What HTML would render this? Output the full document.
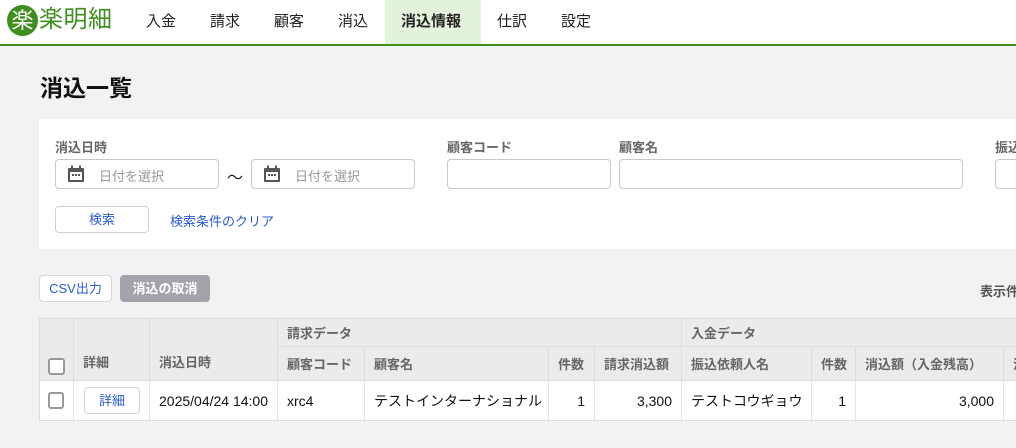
<!DOCTYPE html>
<html><head><meta charset="utf-8"><style>
*{box-sizing:border-box;margin:0;padding:0}
body{width:1016px;height:448px;overflow:hidden;background:#f2f2f2;font-family:"Liberation Sans","Noto Sans CJK JP",sans-serif;position:relative;color:#222}
.a{position:absolute;white-space:nowrap}
.hdr{position:absolute;left:0;top:0;width:1016px;height:46px;background:#fff;border-bottom:2px solid #3f8f1f}
.nav{font-size:15px;top:10px;color:#222}
.lbl{font-size:13px;font-weight:bold;color:#666;top:137px}
.inp{background:#fff;border:1px solid #c8c8c8;border-radius:4px;height:30px;top:159px}
.ph{font-size:13px;color:#999}
.th{position:absolute;background:#ebebeb;border-right:1px solid #ddd;border-bottom:1px solid #ddd;font-size:13px;font-weight:bold;color:#666;padding:0 9px;display:flex;align-items:center;white-space:nowrap}
.td{position:absolute;background:#fff;border-right:1px solid #e4e4e4;border-bottom:1px solid #ddd;font-size:14px;color:#111;padding:0 9px;display:flex;align-items:center;white-space:nowrap;top:381px;height:40px}
.cb{width:17px;height:17px;border:2px solid #999;border-radius:3px;background:#fff}
.r{justify-content:flex-end}
</style></head><body>
<div class="hdr"></div>
<div class="a" style="left:7px;top:5px;width:31px;height:31px;border-radius:50%;background:#3f8f1f;color:#fff;font-size:22px;line-height:31px;text-align:center">楽</div>
<div class="a" style="left:39px;top:4px;font-size:24px;color:#3f8f1f;line-height:32px;letter-spacing:0.5px">楽明細</div>
<div class="a" style="left:385px;top:0;width:96px;height:44px;background:#e3f2da"></div>
<div class="a nav" style="left:146px">入金</div>
<div class="a nav" style="left:210px">請求</div>
<div class="a nav" style="left:274px">顧客</div>
<div class="a nav" style="left:338px">消込</div>
<div class="a nav" style="left:401px;font-weight:bold">消込情報</div>
<div class="a nav" style="left:497px">仕訳</div>
<div class="a nav" style="left:561px">設定</div>
<div class="a" style="left:40px;top:69px;font-size:23px;font-weight:bold;color:#111">消込一覧</div>

<div class="a" style="left:39px;top:119px;width:990px;height:130px;background:#fff"></div>
<div class="a lbl" style="left:55px">消込日時</div>
<div class="a lbl" style="left:447px">顧客コード</div>
<div class="a lbl" style="left:619px">顧客名</div>
<div class="a lbl" style="left:995px">振込</div>
<div class="a inp" style="left:55px;width:164px"></div>
<div class="a inp" style="left:251px;width:164px"></div>
<div class="a inp" style="left:447px;width:164px"></div>
<div class="a inp" style="left:619px;width:344px"></div>
<div class="a inp" style="left:995px;width:40px"></div>
<svg class="a" style="left:67px;top:165px" width="18" height="18" viewBox="0 0 18 18"><rect x="1" y="3" width="16" height="14" rx="1" fill="#555"/><rect x="3" y="7" width="12" height="8" fill="#fff"/><rect x="4" y="0.5" width="2" height="4" fill="#555"/><rect x="12" y="0.5" width="2" height="4" fill="#555"/><rect x="5" y="9" width="2" height="2" fill="#555"/><rect x="8" y="9" width="2" height="2" fill="#555"/><rect x="11" y="9" width="2" height="2" fill="#555"/></svg>
<svg class="a" style="left:263px;top:165px" width="18" height="18" viewBox="0 0 18 18"><rect x="1" y="3" width="16" height="14" rx="1" fill="#555"/><rect x="3" y="7" width="12" height="8" fill="#fff"/><rect x="4" y="0.5" width="2" height="4" fill="#555"/><rect x="12" y="0.5" width="2" height="4" fill="#555"/><rect x="5" y="9" width="2" height="2" fill="#555"/><rect x="8" y="9" width="2" height="2" fill="#555"/><rect x="11" y="9" width="2" height="2" fill="#555"/></svg>
<div class="a ph" style="left:99px;top:166px">日付を選択</div>
<div class="a ph" style="left:295px;top:166px">日付を選択</div>
<div class="a" style="left:227px;top:164px;font-size:16px">〜</div>
<div class="a" style="left:55px;top:206px;width:94px;height:27px;border:1px solid #d0d0d0;border-radius:4px;background:#fff;font-size:13px;color:#2a5bd0;text-align:center;line-height:25px">検索</div>
<div class="a" style="left:170px;top:211px;font-size:13px;color:#2a5bd0">検索条件のクリア</div>

<div class="a" style="left:39px;top:275px;width:73px;height:27px;border:1px solid #d8d8d8;border-radius:4px;background:#fff;font-size:13px;color:#2a5bd0;text-align:center;line-height:25px">CSV出力</div>
<div class="a" style="left:120px;top:275px;width:90px;height:27px;border-radius:4px;background:#a3a3ab;font-size:13px;font-weight:bold;color:#fff;text-align:center;line-height:27px">消込の取消</div>
<div class="a" style="left:980px;top:281px;font-size:13px;font-weight:bold;color:#555">表示件</div>

<div class="a" style="left:39px;top:318px;width:977px;height:1px;background:#ddd"></div>
<div class="th" style="left:39px;top:319px;width:35px;height:62px;border-left:1px solid #ddd;align-items:flex-end;padding:0 0 5px 8px"><div class="cb"></div></div>
<div class="th" style="left:74px;top:319px;width:76px;height:62px;align-items:flex-end;padding-bottom:9px">詳細</div>
<div class="th" style="left:150px;top:319px;width:128px;height:62px;align-items:flex-end;padding-bottom:9px">消込日時</div>
<div class="th" style="left:278px;top:319px;width:404px;height:28px">請求データ</div>
<div class="th" style="left:682px;top:319px;width:340px;height:28px">入金データ</div>
<div class="th" style="left:278px;top:347px;width:87px;height:34px">顧客コード</div>
<div class="th" style="left:365px;top:347px;width:184px;height:34px">顧客名</div>
<div class="th" style="left:549px;top:347px;width:46px;height:34px">件数</div>
<div class="th" style="left:595px;top:347px;width:87px;height:34px">請求消込額</div>
<div class="th" style="left:682px;top:347px;width:130px;height:34px">振込依頼人名</div>
<div class="th" style="left:812px;top:347px;width:44px;height:34px">件数</div>
<div class="th" style="left:856px;top:347px;width:148px;height:34px">消込額（入金残高）</div>
<div class="th" style="left:1004px;top:347px;width:30px;height:34px">消</div>

<div class="td" style="left:39px;width:35px;border-left:1px solid #ddd;padding-left:8px"><div class="cb"></div></div>
<div class="td" style="left:74px;width:76px;padding-left:10px"><div style="width:56px;height:27px;border:1px solid #d0d0d0;border-radius:4px;font-size:13px;color:#2a5bd0;text-align:center;line-height:25px">詳細</div></div>
<div class="td" style="left:150px;width:128px">2025/04/24 14:00</div>
<div class="td" style="left:278px;width:87px">xrc4</div>
<div class="td" style="left:365px;width:184px">テストインターナショナル</div>
<div class="td r" style="left:549px;width:46px">1</div>
<div class="td r" style="left:595px;width:87px">3,300</div>
<div class="td" style="left:682px;width:130px">テストコウギョウ</div>
<div class="td r" style="left:812px;width:44px">1</div>
<div class="td r" style="left:856px;width:148px">3,000</div>
<div class="td" style="left:1004px;width:30px"></div>
</body></html>
